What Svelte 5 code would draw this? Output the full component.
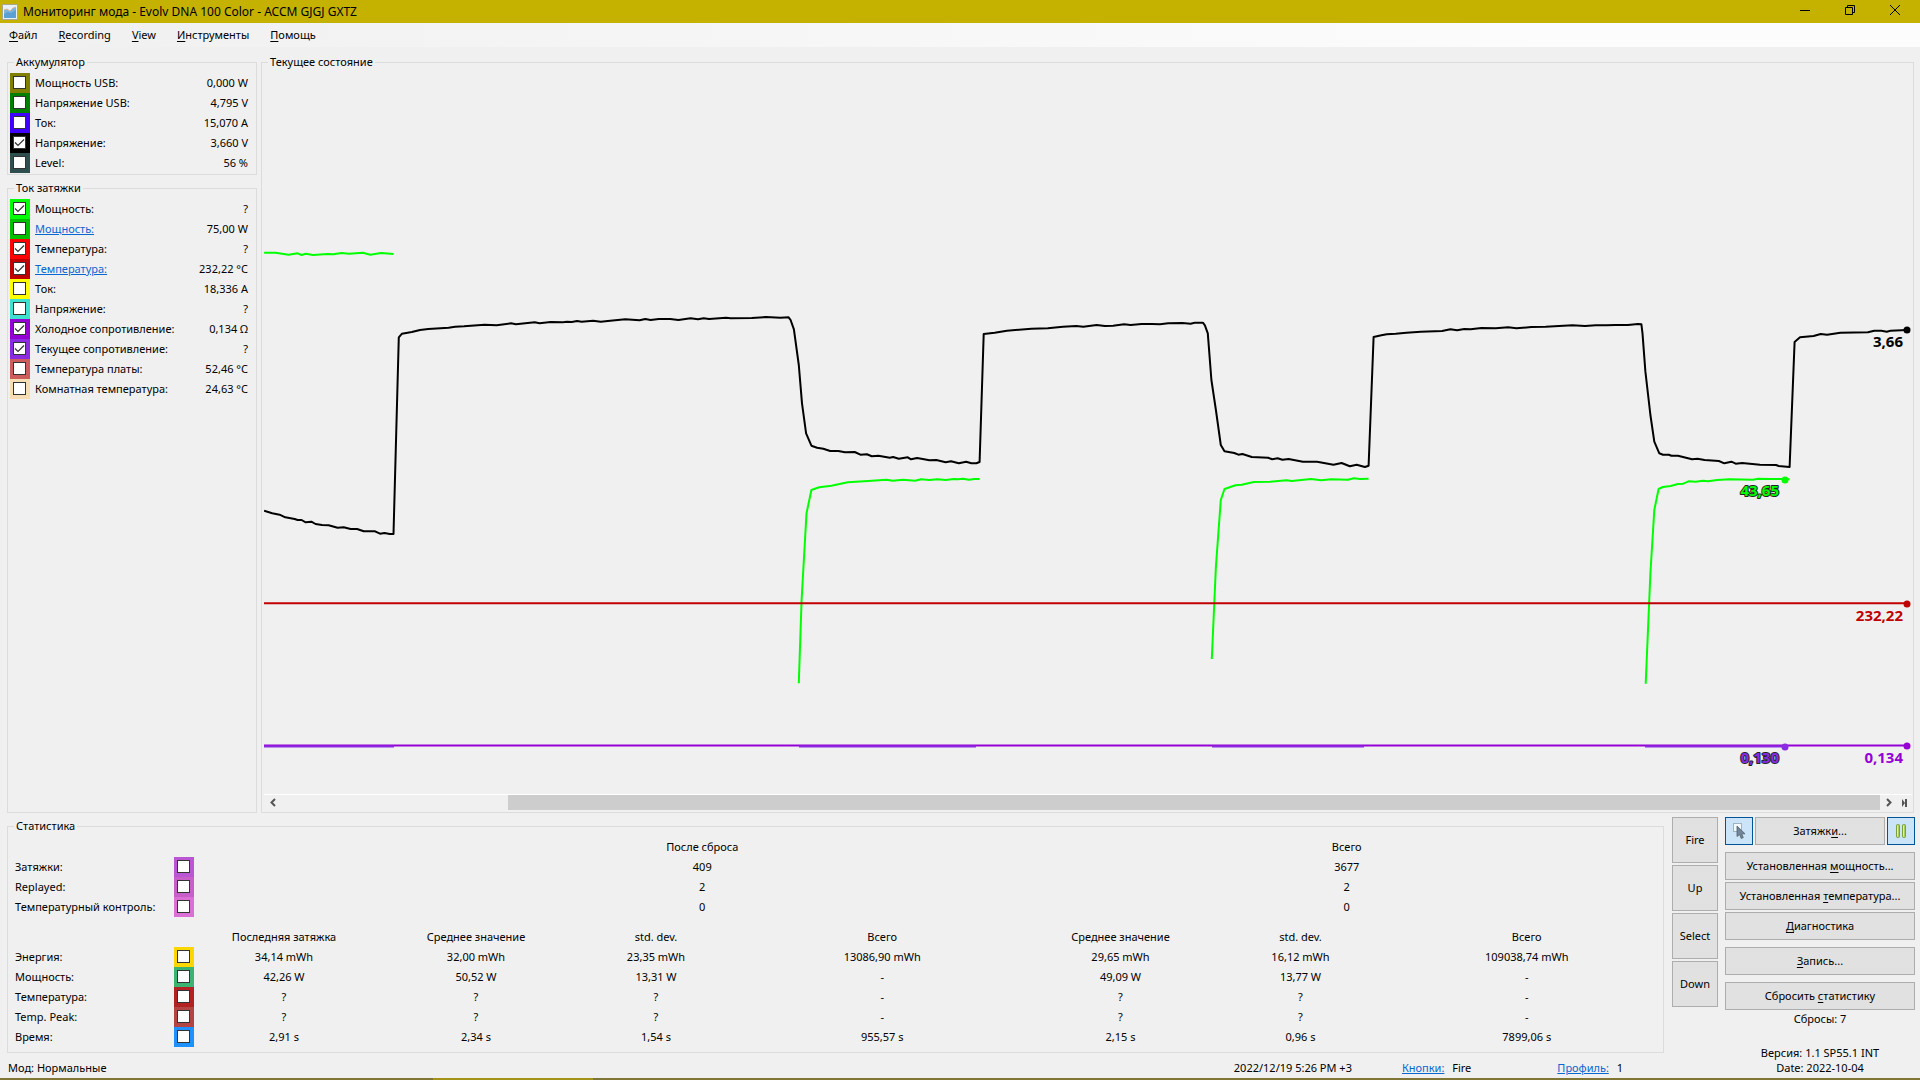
<script lang="ts">
  /**
   * Device monitor window: live readings on the left, the chart with its
   * scrollbar in the middle, and statistics and commands along the bottom.
   */

  interface Reading {
    name: string;
    value: string;
    color: string;
    on?: boolean;
    link?: boolean;
  }

  let battery: Reading[] = $state([
    { name: 'Мощность USB:', value: '0,000 W', color: '#808000' },
    { name: 'Напряжение USB:', value: '4,795 V', color: '#008000' },
    { name: 'Ток:', value: '15,070 A', color: '#4000ff' },
    { name: 'Напряжение:', value: '3,660 V', color: '#000000', on: true },
    { name: 'Level:', value: '56 %', color: '#2f4f4f' },
  ]);

  let puff: Reading[] = $state([
    { name: 'Мощность:', value: '?', color: '#00ff00', on: true },
    { name: 'Мощность:', value: '75,00 W', color: '#00c000', link: true },
    { name: 'Температура:', value: '?', color: '#ff0000', on: true },
    { name: 'Температура:', value: '232,22 °C', color: '#c00000', on: true, link: true },
    { name: 'Ток:', value: '18,336 A', color: '#ffff00' },
    { name: 'Напряжение:', value: '?', color: '#40e0d0' },
    { name: 'Холодное сопротивление:', value: '0,134 Ω', color: '#9400d3', on: true },
    { name: 'Текущее сопротивление:', value: '?', color: '#8a2be2', on: true },
    { name: 'Температура платы:', value: '52,46 °C', color: '#cd5c5c' },
    { name: 'Комнатная температура:', value: '24,63 °C', color: '#f5deb3' },
  ]);

  const counters = [
    { name: 'Затяжки:', color: '#ba55d3', values: ['409', '3677'] },
    { name: 'Replayed:', color: '#c85fc8', values: ['2', '2'] },
    { name: 'Температурный контроль:', color: '#da70d6', values: ['0', '0'] },
  ];

  const headings = [
    'Последняя затяжка',
    'Среднее значение', 'std. dev.', 'Всего',
    'Среднее значение', 'std. dev.', 'Всего',
  ];

  const stats = [
    { name: 'Энергия:', color: '#ffd700', values: ['34,14 mWh', '32,00 mWh', '23,35 mWh', '13086,90 mWh', '29,65 mWh', '16,12 mWh', '109038,74 mWh'] },
    { name: 'Мощность:', color: '#3cb371', values: ['42,26 W', '50,52 W', '13,31 W', '-', '49,09 W', '13,77 W', '-'] },
    { name: 'Температура:', color: '#b22222', values: ['?', '?', '?', '-', '?', '?', '-'] },
    { name: 'Temp. Peak:', color: '#b24444', values: ['?', '?', '?', '-', '?', '?', '-'] },
    { name: 'Время:', color: '#1e90ff', values: ['2,91 s', '2,34 s', '1,54 s', '955,57 s', '2,15 s', '0,96 s', '7899,06 s'] },
  ];

  // [access key, rest]
  const menus = [
    ['Ф', 'айл'],
    ['R', 'ecording'],
    ['V', 'iew'],
    ['И', 'нструменты'],
    ['П', 'омощь'],
  ];

  const keys = ['Fire', 'Up', 'Select', 'Down'];

  // Samples come in blocks; every block has its own origin and samples per pixel
  function trace(x0: number, y0: number, rate: number, raw: string) {
    return raw.split(' ').map((pair) => {
      const [x, y] = pair.split(',').map(Number);
      return `${(x0 + x / rate).toFixed(1)},${(y0 + y / 3).toFixed(1)}`;
    }).join(' ');
  }

  const voltage = [
    trace(260, 230, 2.45, '10,842 30,850 48,854 62,862 85,867 92,870 102,870 112,877 126,875 136,882 152,885 168,886 190,893 205,892 222,897 238,897 254,904 282,904 294,911 305,909 318,912 327,912 340,322 348,311 372,306 392,300 412,297 462,293 478,290 500,289 550,284 580,286 615,280 627,283 650,280 673,277 685,280 712,276 742,277 752,275 764,276 777,273 788,275 816,272 835,275 852,273 895,268 930,271 944,267 957,270 977,267 1005,267 1025,270 1055,265 1073,268 1087,265 1100,267 1142,263 1153,265 1205,264 1240,261 1275,263 1295,262 1300,270 1308,298 1320,405 1328,520 1338,610'),
    trace(760, 300, 2.45, '126,437 140,443 155,446 172,453 192,453 208,457 232,456 246,464 262,463 274,469 290,467 318,473 326,471 340,476 362,472 370,478 385,474 402,478 415,481 432,480 455,487 468,484 487,490 505,485 518,490 530,490 538,486 548,102 575,98 605,92 665,86 705,85 742,80 775,78 792,80 825,75 845,78 865,77 892,73 908,75 935,72 960,72 980,73 1000,70 1035,69 1055,71 1065,68 1085,68 1090,76 1097,100 1106,240 1117,330 1129,435 1138,454 1162,459 1172,464 1182,462 1205,471 1245,473 1255,478 1268,475 1280,479 1295,477 1330,485 1365,485 1405,494 1425,489 1445,499 1462,494 1482,501 1491,497'),
    trace(1360, 300, 2.8, '38,111 60,106 75,103 100,101 130,98 170,95 230,93 253,88 272,91 292,87 310,88 340,84 380,85 415,82 438,85 480,81 520,80 595,76 630,78 660,76 690,76 715,75 750,75 778,72 788,73 791,100 799,215 813,345 824,425 838,460 848,464 865,464 872,467 890,467 930,478 945,476 965,480 1005,483 1020,490 1040,485 1052,491 1070,489 1120,494 1165,495 1172,498 1203,501 1217,126 1232,112 1270,108 1290,102 1308,104 1345,98 1422,97 1440,92 1460,92 1475,95 1485,92 1532,90'),
  ].join(' ');

  const power = [
    trace(260, 230, 2.45, '10,68 38,68 70,74 92,70 102,75 112,71 130,75 165,72 180,73 200,69 218,71 252,68 270,74 297,69 327,72'),
    trace(760, 300, 2.45, '95,1150 102,900 114,640 126,570 145,562 175,557 215,547 265,543 310,539 325,542 350,539 380,542 395,538 415,540 435,538 455,540 475,537 485,538 497,536 512,539 525,537 538,537'),
    trace(760, 300, 2.45, '1107,1077 1117,800 1129,600 1138,567 1165,556 1180,554 1210,546 1250,545 1290,541 1303,543 1350,537 1375,541 1400,538 1440,539 1455,535 1470,537 1491,536'),
    trace(1360, 300, 2.8, '800,1151 813,820 824,630 836,567 848,561 870,558 890,552 905,551 920,544 940,545 960,542 975,544 1000,540 1035,538 1100,539 1115,536 1150,537 1190,537 1203,538'),
  ];

  const markers = [
    { x: 1907, y: 330, label: '3,66', ty: 347, color: '#000000' },
    { x: 1907, y: 604, label: '232,22', ty: 621, color: '#c00000' },
    { x: 1907, y: 746, label: '0,134', ty: 763, color: '#9400d3' },
    { x: 1785, y: 480, label: '43,65', ty: 496, color: '#00ff00', outlined: true },
    { x: 1785, y: 747, label: '0,130', ty: 763, color: '#8a2be2', outlined: true },
  ];

  let selecting = $state(true);
  let paused = $state(true);
</script>

{#snippet readings(items: Reading[], group: string)}
  {#each items as item, i}
    <div class="reading">
      <span class="swatch" style="background:{item.color}">
        <input type="checkbox" id="{group}-{i}" bind:checked={item.on} />
      </span>
      <label for="{group}-{i}">
        {#if item.link}<a href="#{group}-{i}">{item.name}</a>{:else}{item.name}{/if}
      </label>
      <output for="{group}-{i}">{item.value}</output>
    </div>
  {/each}
{/snippet}

<div class="window">
  <header class="titlebar">
    <svg class="app-icon" width="16" height="16" viewBox="0 0 16 16" aria-hidden="true">
      <rect x="0.5" y="0.5" width="15" height="15" fill="#e8f1f8" stroke="#a9a68c" />
      <path d="M2 6l3-1 3 2 3-3 3-1v11H2z" fill="#7db4de" />
      <path d="M2 10l4-2 3 1 5-3v8H2z" fill="#5b9fd3" />
      <path d="M2 6l3-1 3 2 3-3 3-1" fill="none" stroke="#d9b79a" />
    </svg>
    <h1>Мониторинг мода - Evolv DNA 100 Color - ACCM GJGJ GXTZ</h1>
    <div class="caption-buttons">
      <button aria-label="Свернуть">
        <svg width="10" height="10" viewBox="0 0 10 10"><path d="M0 5.5h10" /></svg>
      </button>
      <button aria-label="Восстановить">
        <svg width="10" height="10" viewBox="0 0 10 10"><path d="M0.5 2.5h7v7h-7zM2.5 2.5v-2h7v7h-2" /></svg>
      </button>
      <button aria-label="Закрыть">
        <svg width="10" height="10" viewBox="0 0 10 10"><path d="M0 0l10 10M10 0L0 10" /></svg>
      </button>
    </div>
  </header>

  <nav class="menubar">
    {#each menus as [key, rest]}
      <button><u>{key}</u>{rest}</button>
    {/each}
  </nav>

  <main>
    <div class="upper">
      <div class="sidebar">
        <fieldset>
          <legend>Аккумулятор</legend>
          {@render readings(battery, 'battery')}
        </fieldset>
        <fieldset class="grow">
          <legend>Ток затяжки</legend>
          {@render readings(puff, 'puff')}
        </fieldset>
      </div>

      <fieldset class="chart">
        <legend>Текущее состояние</legend>
        <svg class="plot" viewBox="264 72 1648 722">
          <path class="line cold" d="M264 745.5H1907" />
          <path class="line live" d="M264 746.5H394M799 746.5H976M1212 746.5H1364M1645 746.5H1785" />
          {#each power as points}
            <polyline class="line power" {points} />
          {/each}
          <path class="line temp" d="M264 603.3H1907" />
          <polyline class="line voltage" points={voltage} />
          {#each markers as m}
            <circle cx={m.x} cy={m.y} r="3.5" fill={m.color} />
            <text class:outlined={m.outlined} x={m.outlined ? m.x - 6 : m.x - 4} y={m.ty} fill={m.color}>{m.label}</text>
          {/each}
        </svg>
        <div class="scrollbar">
          <button aria-label="Назад">
            <svg width="8" height="9" viewBox="0 0 8 9"><path d="M6 1L2.5 4.5L6 8" /></svg>
          </button>
          <div class="track"><div class="thumb"></div></div>
          <button aria-label="Вперёд">
            <svg width="8" height="9" viewBox="0 0 8 9"><path d="M2 1l3.5 3.5L2 8" /></svg>
          </button>
          <button class="to-end" aria-label="В конец">
            <svg width="5" height="8" viewBox="0 0 5 8"><path class="solid" d="M0 0l3 4-3 4zM3 0h2v8H3z" /></svg>
          </button>
        </div>
      </fieldset>
    </div>

    <div class="lower">
      <fieldset class="statistics">
        <legend>Статистика</legend>
        <table>
          <colgroup>
            <col class="c-name" /><col class="c-swatch" /><col class="c-value" />
            <col class="c-first" /><col class="c-value" /><col />
            <col class="c-first" /><col class="c-value" /><col />
          </colgroup>
          <tbody>
            <tr>
              <td colspan="3"></td>
              <th class="first" colspan="3" scope="colgroup">После сброса</th>
              <th class="first" colspan="3" scope="colgroup">Всего</th>
            </tr>
            {#each counters as row, i}
              <tr>
                <th class="name" scope="row"><label for="counter-{i}">{row.name}</label></th>
                <td><span class="swatch" style="background:{row.color}"><input type="checkbox" id="counter-{i}" /></span></td>
                <td></td>
                <td class="first" colspan="3">{row.values[0]}</td>
                <td class="first" colspan="3">{row.values[1]}</td>
              </tr>
            {/each}
            <tr class="spacer"><td colspan="9"></td></tr>
            <tr>
              <td colspan="2"></td>
              {#each headings as h, i}
                <th class:first={i === 1 || i === 4} scope="col">{h}</th>
              {/each}
            </tr>
            {#each stats as row, i}
              <tr>
                <th class="name" scope="row"><label for="stat-{i}">{row.name}</label></th>
                <td><span class="swatch" style="background:{row.color}"><input type="checkbox" id="stat-{i}" /></span></td>
                {#each row.values as value, j}
                  <td class:first={j === 1 || j === 4}>{value}</td>
                {/each}
              </tr>
            {/each}
          </tbody>
        </table>
      </fieldset>

      <div class="keys">
        {#each keys as key}
          <button class="push">{key}</button>
        {/each}
      </div>

      <div class="commands">
        <div class="puffs">
          <button class="push toggle" class:pressed={selecting} aria-label="Выбор" aria-pressed={selecting} onclick={() => selecting = !selecting}>
            <svg width="16" height="18" viewBox="0 0 16 18">
              <rect x="2.5" y="1.5" width="8" height="8" fill="#f4f9fd" stroke="#9fb2c2" />
              <path d="M6 4v10.5l2.5-2 1.8 4 2-1-1.7-3.7H14z" fill="#74879a" stroke="#4f6070" stroke-width="0.8" />
            </svg>
          </button>
          <button class="push">Затяжк<u>и</u>...</button>
          <button class="push toggle" class:pressed={paused} aria-label="Пауза" aria-pressed={paused} onclick={() => paused = !paused}>
            <svg width="12" height="16" viewBox="0 0 12 16">
              <rect x="1.5" y="1.5" width="3" height="13" rx="1" fill="#a8d05a" stroke="#7a9f3c" />
              <rect x="7.5" y="1.5" width="3" height="13" rx="1" fill="#a8d05a" stroke="#7a9f3c" />
              <path d="M2.5 2.5v11M8.5 2.5v11" stroke="#dcf0ae" />
            </svg>
          </button>
        </div>
        <div class="setup">
          <button class="push">Установленная <u>м</u>ощность...</button>
          <button class="push">Установленная <u>т</u>емпература...</button>
          <button class="push"><u>Д</u>иагностика</button>
        </div>
        <button class="push"><u>З</u>апись...</button>
        <button class="push">Сбросить <u>с</u>татистику</button>
        <p>Сбросы: 7</p>
        <p class="version">Версия: 1.1 SP55.1 INT<br />Date: 2022-10-04</p>
      </div>

      <footer>
        <span class="mode">Мод: Нормальные</span>
        <span>2022/12/19 5:26 PM +3</span>
        <span class="pair"><a href="#buttons">Кнопки:</a> Fire</span>
        <span class="pair profile"><a href="#profile">Профиль:</a> 1</span>
      </footer>
    </div>
  </main>

  <div class="edge"><span></span></div>
</div>

<style>
  :global(body) {
    background: #f0f0f0;
  }

  .window {
    display: flex;
    flex-direction: column;
    min-height: 100vh;
    font: 11px/20px 'Noto Sans', 'Open Sans', sans-serif;
    color: #000;
  }

  button {
    font: inherit;
    color: inherit;
    padding: 0;
    border: 0;
    background: none;
  }

  u {
    text-underline-offset: 2px;
  }

  a {
    color: #0a66d0;
  }

  .titlebar {
    display: flex;
    align-items: center;
    height: 23px;
    padding: 0 3px 0 2px;
    background: #c5b200;
  }

  h1 {
    flex: 1;
    margin: 0 0 0 5px;
    font-size: 12px;
    font-weight: 400;
  }

  .caption-buttons {
    display: flex;
    align-items: center;
    padding-bottom: 3px;
  }

  .caption-buttons button {
    display: grid;
    place-items: center;
    width: 45px;
    height: 20px;
  }

  .caption-buttons path {
    fill: none;
    stroke: #000;
  }

  .menubar {
    display: flex;
    gap: 21px;
    height: 24px;
    padding-left: 9px;
    background: linear-gradient(90deg, #f0f0f0, #fcfcfc 80%);
  }

  main {
    flex: 1;
    display: flex;
    flex-direction: column;
    padding: 5px 5px 0 7px;
  }

  fieldset {
    min-width: 0;
    margin: 0;
    padding: 1px 8px 1px 2px;
    border: 1px solid #dcdcdc;
  }

  legend {
    margin-left: 4px;
    padding: 0 2px;
  }

  .upper {
    display: grid;
    grid-template-columns: 250px minmax(0, 1fr);
    gap: 4px;
    padding-right: 1px;
  }

  .sidebar {
    display: flex;
    flex-direction: column;
    gap: 3px;
  }

  .grow {
    flex: 1;
  }

  .reading {
    display: flex;
    height: 20px;
  }

  .reading label {
    flex: 1;
    margin-left: 5px;
  }

  .swatch {
    display: block;
    width: 20px;
    height: 20px;
    flex: none;
  }

  .swatch input {
    appearance: none;
    display: block;
    width: 13px;
    height: 13px;
    margin: 0;
    border: 1px solid #333;
    background: #fff;
    transform: translate(3px, 3px);
  }

  .swatch input:checked {
    background: #fff url("data:image/svg+xml,%3Csvg xmlns='http://www.w3.org/2000/svg' viewBox='0 0 11 11'%3E%3Cpath d='M1 5.5L4 8.5L10 2.5' fill='none' stroke='%23333' stroke-width='1.2'/%3E%3C/svg%3E");
  }

  .chart {
    padding: 0 1px 2px 2px;
  }

  .plot {
    display: block;
    width: 100%;
    height: auto;
  }

  .line {
    fill: none;
    stroke-width: 2;
    stroke-linejoin: round;
  }

  .voltage { stroke: #000; }
  .power { stroke: #0f0; }
  .temp { stroke: #c00000; }
  .cold { stroke: #9400d3; }
  .live { stroke: #8a2be2; }

  .plot text {
    font-size: 15px;
    font-weight: 700;
    text-anchor: end;
  }

  .plot .outlined {
    stroke: #222;
    stroke-width: 2;
    stroke-linejoin: round;
    paint-order: stroke;
  }

  .scrollbar {
    display: flex;
    height: 15px;
    border-top: 1px solid #fff;
  }

  .scrollbar button {
    display: grid;
    place-items: center;
    width: 17px;
  }

  .scrollbar .to-end {
    width: 15px;
  }

  .scrollbar path {
    fill: none;
    stroke: #555;
    stroke-width: 2;
  }

  .scrollbar .solid {
    fill: #555;
    stroke: none;
  }

  .track {
    flex: 1;
  }

  .thumb {
    height: 100%;
    margin-left: 14.2%;
    background: #cdcdcd;
  }

  .lower {
    display: grid;
    grid-template-columns: minmax(0, 1fr) 46px 190px;
    column-gap: 7px;
    padding-top: 4px;
  }

  .statistics {
    margin-right: 1px;
    padding: 2px 0 5px;
  }

  .statistics legend {
    margin-left: 6px;
    line-height: 18px;
  }

  table {
    width: 100%;
    table-layout: fixed;
    border-collapse: collapse;
    text-align: center;
  }

  th,
  td {
    height: 20px;
    padding: 0;
    font-weight: 400;
    white-space: nowrap;
  }

  .name {
    padding-left: 7px;
    text-align: left;
  }

  .first {
    padding-left: 12px;
  }

  .spacer td {
    height: 10px;
  }

  .c-name { width: 166px; }
  .c-swatch { width: 20px; }
  .c-value { width: 180px; }
  .c-first { width: 192px; }

  .push {
    height: 28px;
    border: 1px solid #adadad;
    background: #e1e1e1;
    text-align: center;
  }

  .keys {
    display: flex;
    flex-direction: column;
    gap: 2px;
  }

  .keys .push {
    height: 46px;
  }

  .commands {
    grid-row: span 2;
    display: flex;
    flex-direction: column;
    gap: 7px;
  }

  .puffs {
    display: grid;
    grid-template-columns: 28px 1fr 28px;
    gap: 2px;
  }

  .setup {
    display: grid;
    gap: 2px;
  }

  .toggle {
    display: grid;
    place-items: center;
  }

  .pressed {
    border-color: #005499;
    background: #cce4f7;
  }

  .commands p {
    margin: -8px 0 0;
    text-align: center;
  }

  .commands .version {
    margin-top: 9px;
    line-height: 15px;
  }

  footer {
    grid-column: 1 / 3;
    display: flex;
    padding: 5px 95px 0 1px;
  }

  .mode {
    flex: 1;
  }

  .pair {
    margin-left: 50px;
  }

  .profile {
    margin-left: 86px;
  }

  .pair a {
    margin-right: 5px;
  }

  .edge {
    height: 2px;
    background: #7f7636;
  }

  .edge span {
    display: block;
    width: 160px;
    height: 2px;
    margin-left: 433px;
    background: #a39419;
  }
</style>
